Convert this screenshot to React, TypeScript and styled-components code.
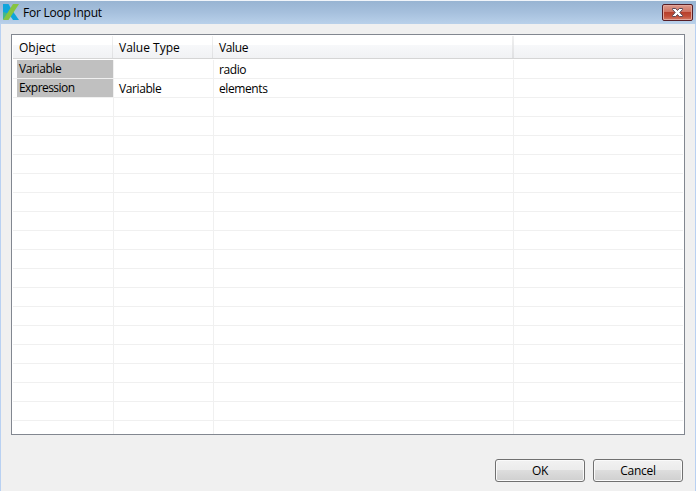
import React from "react";
import styled, { createGlobalStyle } from "styled-components";

const GlobalStyle = createGlobalStyle`
  * { box-sizing: border-box; }
  body { margin: 0; background: #f0f0f0; overflow: hidden; }
`;

const Window = styled.div`
  width: 696px;
  height: 491px;
  display: flex;
  flex-direction: column;
  background: #f0f0f0;
  border: solid #b9d1f2;
  border-width: 0 1px;
  font-family: "Open Sans", "Noto Sans", sans-serif;
  font-size: 12px;
  line-height: 16px;
  color: #000;
`;

const TitleBar = styled.header`
  flex: none;
  height: 24px;
  margin: 0 -1px;
  padding: 1px 3px 0 2px;
  display: flex;
  align-items: center;
  background: linear-gradient(#98b4d2, #a6c0dd 50%, #b9d1ea);
  border-top: 1px solid #f1f5fa;
`;

const Title = styled.h1`
  flex: 1;
  margin: 0 0 0 3px;
  font: inherit;
`;

const Label = styled.span<{ $spacing?: number }>`
  letter-spacing: ${(p) => p.$spacing ?? -0.25}px;
  white-space: nowrap;
`;

const CloseButton = styled.button`
  width: 31px;
  height: 17px;
  margin-top: -1px;
  padding: 0;
  display: flex;
  align-items: center;
  justify-content: center;
  border: 1px solid #571e26;
  border-radius: 2px;
  box-shadow: inset 0 0 0 1px #e3a69b;
  background: linear-gradient(#dc9a8c 0, #cf7363 45%, #b8402d 50%, #c14e39 75%, #d67b66);
`;

const Table = styled.main`
  flex: none;
  width: 674px;
  height: 401px;
  margin: 10px 0 0 10px;
  padding: 1px;
  border: 1px solid #828790;
  background: #fff;
  overflow: hidden;
`;

const HeaderRow = styled.div`
  display: grid;
  grid-template-columns: 100px 100px 300px 1fr;
  height: 23px;
  border-bottom: 1px solid #d5d5d5;
  background: linear-gradient(#fff 0 9px, #f7f8fa 9px, #f1f2f4);
`;

const HeaderCell = styled.div`
  padding: 4px 0 0 6px;
  border-right: 1px solid;
  border-image: linear-gradient(#f2f2f2, #dedfe1) 1;
  &:nth-child(3) { border-right-width: 2px; margin-right: -1px; }
  &:last-child { border: 0; }
`;

const Body = styled.div`
  height: 374px;
  margin-top: 1px;
  overflow: hidden;
`;

const Row = styled.div`
  display: grid;
  grid-template-columns: 101px 100px 300px 1fr;
  height: 19px;
  border-bottom: 1px solid #f0f0f0;
`;

const Cell = styled.div<{ $label?: boolean }>`
  margin-left: ${(p) => (p.$label ? 4 : 0)}px;
  padding: ${(p) => (p.$label ? "1px 0 0 2px" : "2px 0 0 5px")};
  background: ${(p) => (p.$label ? "#c0c0c0" : "transparent")};
  background-clip: padding-box;
  border-right: 1px solid #f0f0f0;
  &:last-child { border: 0; }
`;

const Footer = styled.footer`
  display: flex;
  justify-content: flex-end;
  gap: 8px;
  padding: 24px 12px 0 0;
`;

const Button = styled.button`
  width: 90px;
  height: 23px;
  padding: 0;
  font: inherit;
  color: #000;
  border: 1px solid #707070;
  border-radius: 3px;
  box-shadow: inset 0 0 0 1px #fafafa;
  background: linear-gradient(#f2f2f2, #ebebeb 50%, #dddddd 50%, #cfcfcf);
`;

type Entry = { text: string; spacing?: number } | null;

const headers: Entry[] = [
  { text: "Object", spacing: 0 },
  { text: "Value Type", spacing: 0 },
  { text: "Value", spacing: -0.35 },
  null,
];

const entries: Entry[][] = [
  [{ text: "Variable", spacing: -0.4 }, null, { text: "radio", spacing: -0.4 }, null],
  [
    { text: "Expression", spacing: -0.55 },
    { text: "Variable", spacing: -0.4 },
    { text: "elements", spacing: -0.4 },
    null,
  ],
];

const rows: Entry[][] = Array.from({ length: 20 }, (_, i) => entries[i] ?? [null, null, null, null]);

const Text = ({ entry }: { entry: Entry }) =>
  entry ? <Label $spacing={entry.spacing}>{entry.text}</Label> : null;

const Logo = styled.svg`
  width: 18px;
  height: 18px;
  margin-top: -2px;
`;

const AppLogo = () => (
  <Logo viewBox="0 0 18 18" aria-hidden="true">
    <path d="M1 1h5.500l3 5.500-3 4L1 14z" fill="#0fa5dc" />
    <path d="M1 9l5.500 1.500L1 17z" fill="#3fb78f" />
    <path d="M11 8.500L17 17h-6L7.500 12z" fill="#0fa5dc" />
    <path d="M11 1h6L6.500 17H1z" fill="#86c440" />
  </Logo>
);

const CloseIcon = () => (
  <svg width="13" height="11" viewBox="0 0 13 11" aria-hidden="true">
    <path
      d="M1.500 1.500h3.200l1.800 2 1.800-2h3.200v1L8.800 5.500l2.700 3v1H8.300l-1.800-2-1.800 2H1.500v-1l2.700-3-2.700-3z"
      fill="#fff"
      stroke="#5b4a58"
    />
  </svg>
);

export default function App() {
  return (
    <>
      <GlobalStyle />
      <Window>
        <TitleBar>
          <AppLogo />
          <Title><Label>For Loop Input</Label></Title>
          <CloseButton aria-label="Close"><CloseIcon /></CloseButton>
        </TitleBar>
        <Table>
          <HeaderRow>
            {headers.map((h, i) => <HeaderCell key={i}><Text entry={h} /></HeaderCell>)}
          </HeaderRow>
          <Body>
            {rows.map((row, r) => (
              <Row key={r}>
                {row.map((c, i) => (
                  <Cell key={i} $label={i === 0 && c !== null}><Text entry={c} /></Cell>
                ))}
              </Row>
            ))}
          </Body>
        </Table>
        <Footer>
          <Button><Label>OK</Label></Button>
          <Button><Label>Cancel</Label></Button>
        </Footer>
      </Window>
    </>
  );
}
